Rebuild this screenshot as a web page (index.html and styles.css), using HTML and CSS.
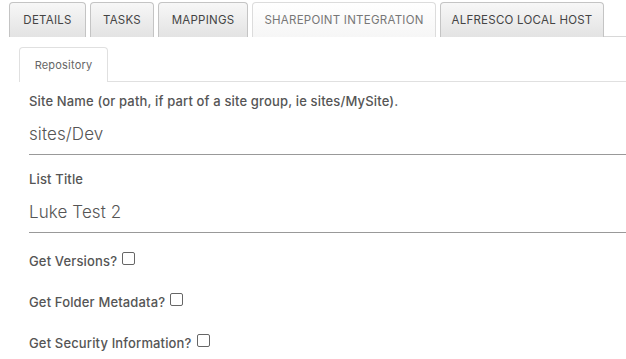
FILE: index.html
```html
<!DOCTYPE html>
<html>
<head>
<meta charset="utf-8">
<link rel="stylesheet" href="styles.css">
</head>
<body>
<div class="tabs">
  <div class="tab t-details">DETAILS</div>
  <div class="tab t-tasks">TASKS</div>
  <div class="tab t-mappings">MAPPINGS</div>
  <div class="tab t-sharepoint active">SHAREPOINT INTEGRATION</div>
  <div class="tab t-alfresco">ALFRESCO LOCAL HOST</div>
  <div class="tab-fill"></div>
</div>
<div class="subtabs">
  <div class="subtab">Repository</div>
  <div class="subtab-fill"></div>
</div>
<div class="form">
  <div class="field">
    <label class="label">Site Name (or path, if part of a site group, ie sites/MySite).</label>
    <div class="input">sites/Dev</div>
  </div>
  <div class="field last">
    <label class="label">List Title</label>
    <div class="input">Luke Test 2</div>
  </div>
  <div class="check"><span>Get Versions?</span><span class="box"></span></div>
  <div class="check"><span>Get Folder Metadata?</span><span class="box"></span></div>
  <div class="check"><span>Get Security Information?</span><span class="box"></span></div>
</div>
</body>
</html>
```
FILE: styles.css
```css
* { box-sizing: border-box; }
html, body { margin: 0; padding: 0; background: #fff; }
body {
  font-family: Inter, "Open Sans", "Liberation Sans", sans-serif;
  color: #444;
  width: 626px;
  height: 359px;
  overflow: hidden;
}
.tabs {
  display: flex;
  align-items: flex-end;
  padding: 2px 0 0 9px;
  gap: 4px;
  height: 37px;
}
.tab {
  height: 35px;
  display: flex;
  align-items: center;
  justify-content: center;
  font-size: 11.5px;
  letter-spacing: 0.25px;
  color: #444;
  border: 1px solid #c4c4c4;
  border-bottom: none;
  border-radius: 4px 4px 0 0;
  background: linear-gradient(#f7f7f7, #e3e3e3);
}
.t-details { width: 77px; }
.t-tasks { width: 64px; }
.t-mappings { width: 90px; }
.t-sharepoint { width: 184px; }
.t-alfresco { width: 164px; }
.tab.active {
  background: linear-gradient(#fff, #f6f6f6);
  border-color: #dcdcdc;
  color: #777;
}
.tab-fill {
  flex: 1;
  align-self: flex-end;
  border-bottom: 1px solid #d8d8d8;
  height: 1px;
  margin-left: -4px;
}
.subtabs {
  display: flex;
  align-items: flex-end;
  padding: 10px 0 0 19px;
}
.subtab {
  width: 89px;
  height: 35px;
  display: flex;
  align-items: center;
  justify-content: center;
  font-size: 11px;
  letter-spacing: 0.2px;
  color: #666;
  border: 1px solid #e0e0e0;
  border-bottom: none;
  border-radius: 4px 4px 0 0;
  background: #fff;
}
.subtab-fill {
  flex: 1;
  border-bottom: 1px solid #e0e0e0;
}
.form {
  padding: 10px 0 0 29px;
}
.field {
  display: flex;
  flex-direction: column;
  margin-bottom: 15px;
}
.field.last { margin-bottom: 7px; }
.label {
  font-size: 13px;
  font-weight: 500;
  letter-spacing: 0.15px;
  color: #555;
  line-height: 18px;
}
.input {
  font-size: 17px;
  font-weight: 300;
  letter-spacing: 0.1px;
  color: #555;
  height: 45px;
  padding-top: 13px;
  line-height: 22px;
  border-bottom: 1px solid #999;
}
.check {
  display: flex;
  align-items: center;
  gap: 5px;
  font-size: 13px;
  font-weight: 500;
  letter-spacing: 0.15px;
  color: #555;
  height: 41px;
}
.box {
  width: 13px;
  height: 13px;
  border: 1px solid #666;
  border-radius: 2px;
  background: #fff;
  margin-top: -4px;
}
```
